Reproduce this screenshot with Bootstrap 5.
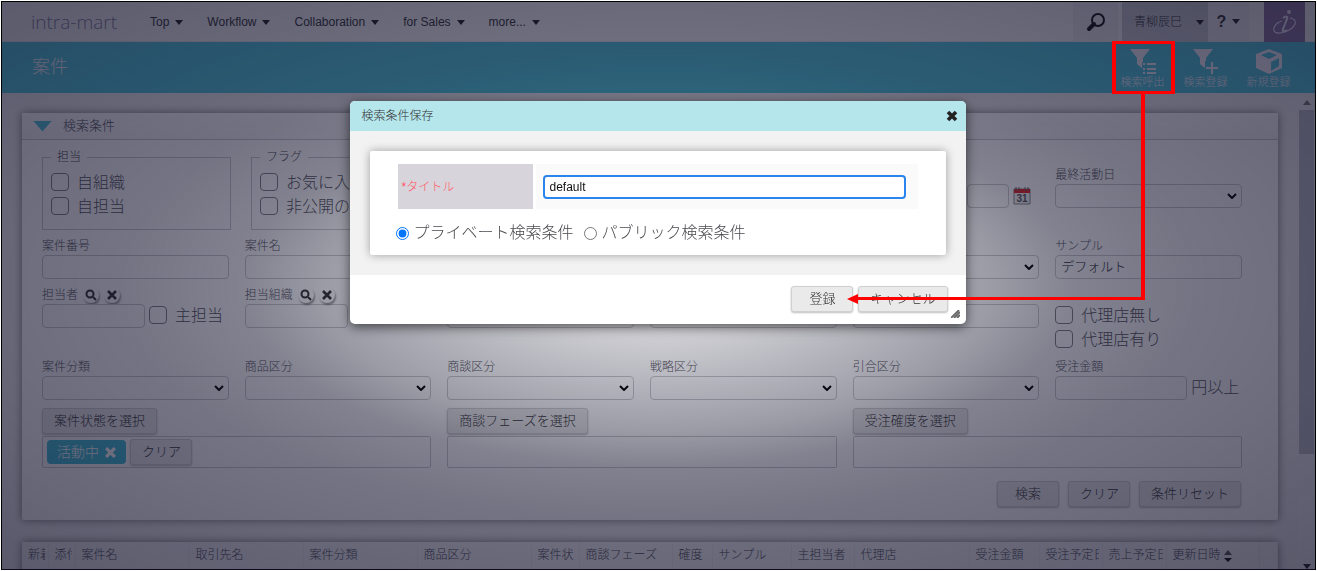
<!DOCTYPE html>
<html lang="ja">
<head>
<meta charset="utf-8">
<meta name="viewport" content="width=device-width, initial-scale=1">
<title>案件</title>
<link href="https://cdn.jsdelivr.net/npm/bootstrap@5.3.0/dist/css/bootstrap.min.css" rel="stylesheet">
<style>
  :root { --teal: #4ec5d9; --line: #cacace; }
  body { font: 300 12px/16px "Liberation Sans", "Noto Sans CJK JP", sans-serif; color: #4a4a50; background: #fff; padding: 1px; }
  .app-frame { height: calc(100vh - 2px); border: 1px solid #000; background: #eeeef0; overflow: hidden; }
  .topbar { height: 40px; background: #f4f4f4; border-bottom: 1px solid #e6e6ea; }
  .brand { font: 300 19px/40px "Open Sans", "Noto Sans", sans-serif; color: #85809a; margin-left: 29px; width: 119px; }
  .topnav a { color: #333; text-decoration: none; margin-right: 24px; }
  .caret::after { content: ""; display: inline-block; border: 4px solid transparent; border-top: 5px solid #222; border-bottom: 0; margin-left: 6px; vertical-align: 1px; }
  .top-tool { height: 40px; color: #333; border: 0; background: #e9e9ec; padding: 0; font-size: 12px; font-weight: 300; }
  .tool-search { width: 45px; margin-right: 4px; }
  .tool-user { width: 86px; background: #c8c8ce; padding: 0 4px 0 12px; }
  .tool-help { width: 41px; margin-right: 15px; font-weight: 700; font-size: 16px; }
  .tool-help::after { vertical-align: 3px; }
  .tool-logo { width: 41px; background: #8d739f; margin-right: 10px; }
  .titlebar { height: 51px; background: var(--teal); color: #f4f0f8; padding: 0 15px 0 30px; }
  .titlebar h1 { font-size: 18px; line-height: 50px; font-weight: 300; }
  .action { color: #f4f0fa; text-decoration: none; font-size: 11px; line-height: 12px; width: 63px; text-align: center; padding-top: 7px; }
  .action svg { display: block; margin: 0 auto 2px; }
  .work-area { padding: 20px 20px 0; min-width: 0; }
  .sheet { background: #fff; border-radius: 2px; box-shadow: 0 0 9px rgba(0,0,0,.5); }
  .sheet-head { height: 27px; border-bottom: 1px solid #c8c8cc; background: linear-gradient(#fff, #f6f6f8); padding-left: 11px; font-size: 13px; line-height: 26px; }
  .fold { width: 19px; height: 11px; background: var(--teal); clip-path: polygon(0 0, 100% 0, 50% 100%); margin-right: 11px; }
  .sheet-body { padding: 8px 20px 0; }
  .row-first { height: 89px; }
  .group { width: 189px; height: 82px; margin: 0 20px 0 0; border: 1px solid var(--line); padding: 0 8px; }
  .group legend { float: none; width: auto; font-size: 12px; line-height: 18px; margin: 0 0 5px; padding: 0 6px; }
  .check-line { display: flex; align-items: center; font-size: 16px; line-height: 24px; height: 24px; color: #55555c; }
  .check-line input { appearance: none; width: 18px; height: 18px; border: 1px solid #808086; border-radius: 4px; margin: 0 8px 3px 0; background: #fff; }
  .field-label { display: block; line-height: 18px; height: 18px; color: #55555c; }
  .box-in { display: block; width: 100%; height: 24px; border: 1px solid var(--line); border-radius: 4px; background: #fff; padding: 0 5px 3px; font-size: 13px; line-height: 18px; color: #222; font-weight: 300; }
  select.box-in { appearance: none; background: #fff url("data:image/svg+xml,%3Csvg xmlns='http://www.w3.org/2000/svg' viewBox='0 0 10 6'%3E%3Cpath d='M1 1l4 4 4-4' fill='none' stroke='%23000' stroke-width='2'/%3E%3C/svg%3E") no-repeat right 4px center / 10px 6px; }
  .cell { padding-right: 16px; }
  .pad-18 { padding-top: 18px; }
  .row-a { height: 49px; }
  .row-b { height: 72px; }
  .row-c { height: 50px; }
  .w-part { width: 103px; }
  .w-amount { width: 132px; }
  .w-day { width: 42px; }
  .round-btn { width: 16px; height: 16px; border: 0; border-radius: 50%; padding: 0; display: inline-flex; align-items: center; justify-content: center; background: #fff; box-shadow: 1px 2px 2px rgba(0,0,0,.4); margin: 1px 0 0 5px; }
  .push { font-size: 13px; line-height: 16px; height: 26px; padding: 0 11px; border: 1px solid #d0d0d0; border-radius: 3px; background: #eaeaea; color: #333; box-shadow: 0 1px 2px rgba(0,0,0,.25); font-weight: 300; white-space: nowrap; }
  .push-62 { width: 62px; }
  .tray { height: 32px; border: 1px solid var(--line); border-radius: 2px; margin-top: 2px; padding: 2px 4px; }
  .chip { height: 24px; background: #40bcd5; color: #fff; border: 0; border-radius: 4px; padding: 0 10px; font-size: 14px; line-height: 22px; font-weight: 300; margin: 1px 4px 0 0; display: flex; align-items: center; gap: 6px; }
  .foot { padding: 13px 37px 13px 0; gap: 9px; }
  .grid-head { margin-top: 22px; }
  .grid-head table { table-layout: fixed; width: 100%; margin: 0; background: #f2f2f4; }
  .grid-head th { font-weight: 300; height: 40px; padding: 0 0 14px 6px; white-space: nowrap; overflow: hidden; border-right: 1px solid #e8e8ea; }
  .grid-head th > span { display: block; overflow: hidden; margin-right: 3px; }
  .scroller { width: 17px; background: #efeff2; padding: 7px 0 0; flex: none; }
  .scroll-thumb { flex: 0 1 344px; background: #bcbcc6; margin: 5px 1px 0; align-self: stretch; }
  .tri { border: 4px solid transparent; }
  .tri-up { border-bottom: 5px solid #777; border-top: 0; }
  .tri-down { border-top: 5px solid #222; border-bottom: 0; margin-top: auto; }
  .shade { position: fixed; inset: 2px 2px 1px 2px; background: radial-gradient(ellipse farthest-corner at center,
      rgba(18,18,44,.1) 0, rgba(18,18,44,.23) 15%, rgba(18,18,44,.42) 36%, rgba(18,18,44,.53) 45%, rgba(18,18,44,.59) 58%, rgba(18,18,44,.68) 100%); z-index: 10; }
  .dialog-layer { position: absolute; top: 101px; left: 0; right: 2px; z-index: 20; }
  .dialog-box { width: 616px; background: #fff; border-radius: 5px; overflow: hidden; box-shadow: 0 3px 12px rgba(0,0,0,.6); }
  .dialog-head { height: 30px; background: #b4e6ec; padding: 0 8px 0 12px; }
  .dialog-head h2 { font-size: 12px; line-height: 30px; font-weight: 300; margin: 0; color: #333; }
  .dialog-main { background: #f2f2f2; padding: 20px; }
  .dialog-card { background: #fff; border-radius: 2px; box-shadow: 0 0 10px rgba(0,0,0,.35); padding: 13px 28px 0; height: 104px; }
  .req { width: 135px; height: 45px; background: #d8d4dc; color: #ff5562; padding-left: 4px; line-height: 46px; margin-right: 3px; }
  .entry { background: #fafafa; padding: 0 12px 0 7px; }
  .entry input { width: 100%; height: 24px; font-size: 12px; border: 2px solid #2a84ee; border-radius: 4px; padding: 0 5px; color: #111; outline: 0; }
  .choice { font-size: 16px; line-height: 24px; margin: 12px 0 0 -2px; }
  .choice input { width: 13px; height: 13px; margin: 1px 5px 0 0; }
  .choice label { margin-right: 10px; }
  .dialog-foot { height: 49px; padding: 11px 18px 0 0; gap: 5px; position: relative; }
  .grip { position: absolute; right: 6px; bottom: 6px; }
  /* annotation drawn above the dialog */
  .mark-box { position: absolute; top: 41px; right: 142px; width: 63px; height: 53px; border: 4px solid red; border-width: 3px 4px; z-index: 30; }
  .mark-line { position: absolute; top: 94px; left: calc(50% + 198px); right: 172px; height: 206px; border: solid red; border-width: 0 4px 3px 0; z-index: 30; pointer-events: none; }
  .mark-line::before { content: ""; position: absolute; left: -10px; bottom: -7px; border: solid transparent; border-width: 5px 11px 5px 0; border-right-color: red; }
</style>
</head>
<body>
<div class="app-frame d-flex flex-column">
  <header class="topbar d-flex align-items-center flex-shrink-0">
    <div class="brand">intra-mart</div>
    <nav class="topnav flex-grow-1">
      <a class="caret" href="#">Top</a><a class="caret" href="#">Workflow</a><a class="caret" href="#">Collaboration</a><a class="caret" href="#">for Sales</a><a class="caret" href="#">more...</a>
    </nav>
    <button class="top-tool tool-search" aria-label="検索"><svg width="20" height="20" viewBox="0 0 20 20"><circle cx="12" cy="8" r="6" fill="none" stroke="#111" stroke-width="2"/><path d="M8 12l-5 5" stroke="#111" stroke-width="4" stroke-linecap="round"/></svg></button>
    <button class="top-tool tool-user d-flex align-items-center justify-content-between"><span class="text-nowrap">青柳辰巳</span><span class="caret"></span></button>
    <button class="top-tool tool-help caret">?</button>
    <button class="top-tool tool-logo" aria-label="intra-mart"><svg width="26" height="26" viewBox="0 0 26 26" fill="none" stroke="#f0eaf8"><circle cx="17" cy="3" r="1.9" fill="#f0eaf8" stroke="none"/><path d="M11 9c3-2 5-2 4 1l-4 10c-1 3 1 3 4 1" stroke-width="2"/><path d="M10 12C3 14 0 20 3 23c4 3 17-1 20-8 1-4-1-5-5-6" stroke-width="1.1"/></svg></button>
  </header>
  <div class="titlebar d-flex justify-content-between flex-shrink-0">
    <h1 class="m-0">案件</h1>
    <div class="d-flex">
      <a class="action" href="#"><svg width="26" height="25" viewBox="0 0 26 25" fill="#f4f0fa"><path d="M0 0h20l-7 9v11l-6-5V9z"/><path d="M12 13h15v12H12z" fill="#4ec5d9"/><path d="M13 14h2v2h-2zm4 0h9v2h-9zm-4 5h2v2h-2zm4 0h9v2h-9zm-4 4h2v2h-2zm4 0h9v2h-9z"/></svg>検索呼出</a>
      <a class="action" href="#"><svg width="26" height="25" viewBox="0 0 26 25" fill="#f4f0fa"><path d="M0 0h20l-7 9v11l-6-5V9z"/><path d="M12 12h14v13H12z" fill="#4ec5d9"/><path d="M18 13h2v5h5v2h-5v5h-2v-5h-5v-2h5z"/></svg>検索登録</a>
      <a class="action" href="#"><svg width="26" height="25" viewBox="0 0 26 25"><path d="M13 0l13 5v14l-13 6L0 19V5z" fill="#f4f0fa"/><path d="M13 3l8 3-8 4-8-4z M15 13l8-4v8l-8 5z" fill="#4ec5d9"/></svg>新規登録</a>
    </div>
  </div>
  <div class="d-flex flex-grow-1 overflow-hidden">
    <main class="work-area flex-grow-1">
      <section class="sheet">
        <div class="sheet-head d-flex align-items-center"><span class="fold"></span>検索条件</div>
        <div class="sheet-body">
          <div class="row g-0 row-first">
            <div class="col-8 d-flex">
              <fieldset class="group"><legend>担当</legend>
                <label class="check-line"><input type="checkbox">自組織</label>
                <label class="check-line"><input type="checkbox">自担当</label></fieldset>
              <fieldset class="group"><legend>フラグ</legend>
                <label class="check-line"><input type="checkbox">お気に入り</label>
                <label class="check-line"><input type="checkbox">非公開のみ</label></fieldset>
            </div>
            <div class="col-2 cell pad-18"><div class="field-label"></div>
              <div class="d-flex justify-content-end align-items-center pe-2">
                <input class="box-in w-day me-1" aria-label="日付" type="text">
                <svg width="18" height="18" viewBox="0 0 18 18"><path d="M1 2h16v15H1z" fill="#eee" stroke="#888"/><path d="M1 2h16v4H1z" fill="#e02020"/><path d="M3 0v4M6 0v4M12 0v4M15 0v4" stroke="#666"/><text x="9" y="15" font-size="10" font-weight="700" text-anchor="middle" font-family="Liberation Sans" fill="#555">31</text></svg>
              </div></div>
            <div class="col-2 cell pad-18"><label class="field-label" for="last">最終活動日</label><select class="box-in" id="last"><option></option></select></div>
          </div>
          <div class="row g-0 row-a">
            <div class="col-2 cell"><label class="field-label" for="a1">案件番号</label><input class="box-in" id="a1"></div>
            <div class="col-2 cell"><label class="field-label" for="a2">案件名</label><input class="box-in" id="a2"></div>
            <div class="col-2 cell"><div class="field-label"></div><input class="box-in" aria-label="取引先名"></div>
            <div class="col-2 cell"><div class="field-label"></div><input class="box-in" aria-label="顧客"></div>
            <div class="col-2 cell"><div class="field-label"></div><select class="box-in" aria-label="区分"><option></option></select></div>
            <div class="col-2 cell"><label class="field-label" for="a6">サンプル</label><input class="box-in" id="a6" value="デフォルト"></div>
          </div>
          <div class="row g-0 row-b">
            <div class="col-2 cell"><div class="d-flex"><label class="field-label" for="b1">担当者</label>
              <button class="round-btn" aria-label="検索"><svg width="12" height="12" viewBox="0 0 12 12" fill="none" stroke="#333" stroke-width="2"><circle cx="5" cy="5" r="3.5"/><path d="M8 8l3 3"/></svg></button>
              <button class="round-btn" aria-label="消去"><svg width="10" height="10" viewBox="0 0 10 10" stroke="#333" stroke-width="2.6"><path d="M1 1l8 8M9 1l-8 8"/></svg></button></div>
              <div class="d-flex"><input class="box-in w-part me-1" id="b1"><label class="check-line text-nowrap"><input type="checkbox">主担当</label></div></div>
            <div class="col-2 cell"><div class="d-flex"><label class="field-label" for="b2">担当組織</label>
              <button class="round-btn" aria-label="検索"><svg width="12" height="12" viewBox="0 0 12 12" fill="none" stroke="#333" stroke-width="2"><circle cx="5" cy="5" r="3.5"/><path d="M8 8l3 3"/></svg></button>
              <button class="round-btn" aria-label="消去"><svg width="10" height="10" viewBox="0 0 10 10" stroke="#333" stroke-width="2.6"><path d="M1 1l8 8M9 1l-8 8"/></svg></button></div>
              <input class="box-in w-part" id="b2"></div>
            <div class="col-2 cell"><div class="field-label"></div><input class="box-in" aria-label="部門"></div>
            <div class="col-2 cell"><div class="field-label"></div><input class="box-in" aria-label="地域"></div>
            <div class="col-2 cell"><div class="field-label"></div><input class="box-in" aria-label="代理店"></div>
            <div class="col-2 cell pad-18"><label class="check-line"><input type="checkbox">代理店無し</label><label class="check-line"><input type="checkbox">代理店有り</label></div>
          </div>
          <div class="row g-0 row-c">
            <div class="col-2 cell"><label class="field-label" for="c1">案件分類</label><select class="box-in" id="c1"><option></option></select></div>
            <div class="col-2 cell"><label class="field-label" for="c2">商品区分</label><select class="box-in" id="c2"><option></option></select></div>
            <div class="col-2 cell"><label class="field-label" for="c3">商談区分</label><select class="box-in" id="c3"><option></option></select></div>
            <div class="col-2 cell"><label class="field-label" for="c4">戦略区分</label><select class="box-in" id="c4"><option></option></select></div>
            <div class="col-2 cell"><label class="field-label" for="c5">引合区分</label><select class="box-in" id="c5"><option></option></select></div>
            <div class="col-2 cell"><label class="field-label" for="c6">受注金額</label><div class="d-flex"><input class="box-in w-amount me-1" id="c6"><span class="check-line text-nowrap">円以上</span></div></div>
          </div>
          <div class="row g-0">
            <div class="col-4 cell"><button class="push">案件状態を選択</button><div class="tray d-flex"><button class="chip">活動中<svg width="11" height="11" viewBox="0 0 10 10" stroke="#fff" stroke-width="3"><path d="M1 1l8 8M9 1l-8 8"/></svg></button><button class="push push-62">クリア</button></div></div>
            <div class="col-4 cell"><button class="push">商談フェーズを選択</button><div class="tray"></div></div>
            <div class="col-4 cell"><button class="push">受注確度を選択</button><div class="tray"></div></div>
          </div>
        </div>
        <div class="foot d-flex justify-content-end"><button class="push push-62">検索</button><button class="push push-62">クリア</button><button class="push">条件リセット</button></div>
      </section>
      <div class="grid-head sheet">
        <table>
          <colgroup><col width="26"><col width="27"><col width="114"><col width="114"><col width="114"><col width="114"><col width="48"><col width="93"><col width="40"><col width="79"><col width="63"><col width="115"><col width="70"><col width="63"><col width="64"><col width="93"><col></colgroup>
          <thead><tr>
            <th><span>新着</span></th><th><span>添付</span></th><th>案件名</th><th>取引先名</th><th>案件分類</th><th>商品区分</th><th><span>案件状</span></th><th>商談フェーズ</th><th>確度</th><th>サンプル</th><th>主担当者</th><th>代理店</th><th>受注金額</th><th><span>受注予定日</span></th><th><span>売上予定日</span></th><th>更新日時 <svg width="8" height="12" viewBox="0 0 8 12"><path d="M0 5l4-5 4 5z" fill="#555"/><path d="M0 8h8l-4 4z" fill="#111"/></svg></th><th></th>
          </tr></thead>
        </table>
      </div>
    </main>
    <div class="scroller d-flex flex-column align-items-center"><span class="tri tri-up"></span><span class="scroll-thumb"></span><span class="tri tri-down"></span></div>
  </div>
</div>
<div class="shade"></div>
<div class="dialog-layer d-flex justify-content-center">
  <div class="dialog-box" role="dialog" aria-labelledby="dlgTitle">
    <div class="dialog-head d-flex justify-content-between align-items-center"><h2 id="dlgTitle">検索条件保存</h2>
      <button class="border-0 bg-transparent p-0 lh-1" aria-label="閉じる"><svg width="12" height="12" viewBox="0 0 12 12" stroke="#222" stroke-width="3.6"><path d="M2 2l8 8M10 2l-8 8"/></svg></button></div>
    <div class="dialog-main"><div class="dialog-card">
      <div class="d-flex"><label class="req flex-shrink-0" for="ttl">*タイトル</label><div class="entry flex-grow-1 d-flex align-items-center"><input id="ttl" value="default"></div></div>
      <div class="choice d-flex align-items-center"><input type="radio" name="scope" id="r1" checked><label for="r1">プライベート検索条件</label><input type="radio" name="scope" id="r2"><label for="r2">パブリック検索条件</label></div>
    </div></div>
    <div class="dialog-foot d-flex justify-content-end align-items-start"><button class="push push-62">登録</button><button class="push">キャンセル</button>
      <svg class="grip" width="9" height="8" viewBox="0 0 9 8" stroke="#666" stroke-width="1.8"><path d="M0 8l8-8M3 8l6-6M6 8l3-3"/></svg></div>
  </div>
</div>
<div class="mark-box"></div>
<div class="mark-line"></div>
<script src="https://cdn.jsdelivr.net/npm/bootstrap@5.3.0/dist/js/bootstrap.bundle.min.js"></script>
</body>
</html>
